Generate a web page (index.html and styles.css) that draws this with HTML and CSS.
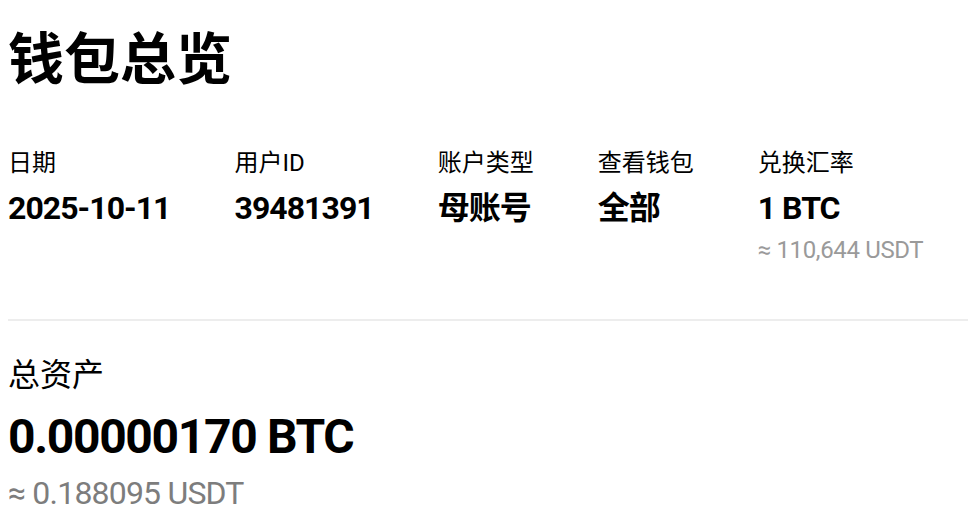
FILE: index.html
```html
<!DOCTYPE html>
<html lang="zh-CN">
<head>
    <meta charset="UTF-8" />
    <meta name="viewport" content="width=device-width, initial-scale=1.0" />
    <title>钱包总览</title>
    <link rel="stylesheet" href="styles.css">
</head>
<body>
    <h1 class="titulo">钱包总览</h1>

    <div class="info-fila">
        <div class="info-item">
            <div class="info-label">日期</div>
            <div class="info-valor">2025-10-11</div>
        </div>
        <div class="info-item">
            <div class="info-label">用户ID</div>
            <div class="info-valor">39481391</div>
        </div>
        <div class="info-item">
            <div class="info-label">账户类型</div>
            <div class="info-valor">母账号</div>
        </div>
        <div class="info-item">
            <div class="info-label">查看钱包</div>
            <div class="info-valor">全部</div>
        </div>
        <div class="info-item">
            <div class="info-label">兑换汇率</div>
            <div class="info-valor">1 BTC</div>
            <div class="info-sub">≈ 110,644 USDT</div>
        </div>
    </div>

    <hr class="separador">

    <div class="total">
        <div class="total-label">总资产</div>
        <div class="total-valor">0.00000170 BTC</div>
        <div class="total-sub">≈ 0.188095 USDT</div>
    </div>
</body>
</html>
```

FILE: styles.css
```css
body {
    margin: 0;
    padding: 8px;
    background: #fff;
    color: #000;
    font-family: Roboto, "Noto Sans CJK SC", sans-serif;
}
.titulo {
    margin: 0;
    padding-top: 13px;
    font-family: "Noto Sans CJK SC", sans-serif;
    font-size: 56px;
    font-weight: 700;
    line-height: 1.2;
}
.info-fila {
    display: flex;
    gap: 64px;
    margin-top: 59px;
}
.info-label {
    font-size: 24px;
    line-height: 32px;
}
.info-valor {
    margin-top: 9px;
    font-size: 32px;
    font-weight: 700;
    line-height: 40px;
    letter-spacing: -0.03em;
}
.info-sub {
    margin-top: 6px;
    font-size: 24px;
    line-height: 32px;
    letter-spacing: -0.015em;
    color: #9a9a9a;
}
.separador {
    margin: 53px -8px 0 0;
    border: none;
    height: 2px;
    background: #ededed;
}
.total {
    margin-top: 34px;
}
.total-label {
    font-size: 32px;
    line-height: 40px;
}
.total-valor {
    margin-top: 14px;
    font-size: 48px;
    font-weight: 700;
    line-height: 56px;
    letter-spacing: -0.028em;
}
.total-sub {
    margin-top: 8px;
    font-size: 32px;
    line-height: 40px;
    letter-spacing: -0.025em;
    color: #7d7d7d;
}
```
